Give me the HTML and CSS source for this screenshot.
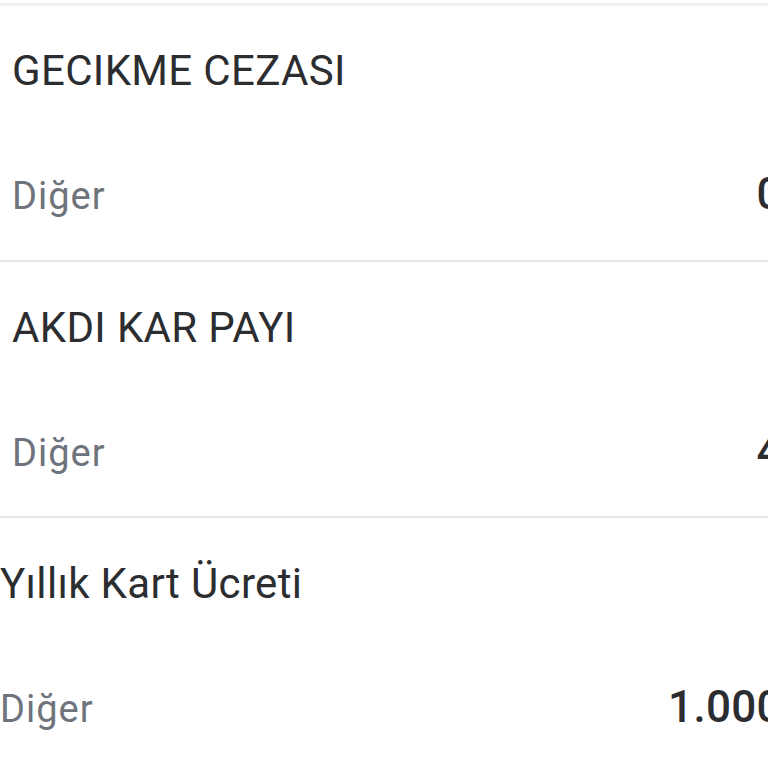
FILE: index.html
```html
<!DOCTYPE html>
<html lang="tr">

<head>
    <meta charset="UTF-8">
    <meta name="viewport" content="width=device-width, initial-scale=1.0">
    <title>Hesap Hareketleri</title>
    <link rel="stylesheet" href="styles.css">
</head>

<body>
    <!-- Hareket listesi -->
    <ul class="tx-list">
        <li class="tx-item">
            <div class="tx-title">GECIKME CEZASI</div>
            <div class="tx-meta">
                <span class="tx-type">Diğer</span>
                <span class="tx-amount">0,60 TL</span>
            </div>
        </li>
        <li class="tx-item">
            <div class="tx-title">AKDI KAR PAYI</div>
            <div class="tx-meta">
                <span class="tx-type">Diğer</span>
                <span class="tx-amount">4,75 TL</span>
            </div>
        </li>
        <li class="tx-item tx-item--swiped">
            <div class="tx-title">Yıllık Kart Ücreti</div>
            <div class="tx-meta">
                <span class="tx-type">Diğer</span>
                <span class="tx-amount">1.000,00 TL</span>
            </div>
        </li>
    </ul>
</body>

</html>
```

FILE: styles.css
```css
:root {
    --text-main: #2b2d30;
    --text-muted: #6e737c;
    --divider: #e6e6e6;
}

/* sayfa */
body {
    margin: 0;
    background: #fff;
    font-family: Roboto, "Noto Sans", Arial, sans-serif;
    overflow: hidden;
}

.tx-list {
    list-style: none;
    margin: 0;
    padding: 3px 0 0;
    width: 916px;
}

/* tek satır */
.tx-item {
    box-sizing: border-box;
    height: 257px;
    padding: 40px 12px 0;
    border-top: 3px solid #f0f0f0;
    background: #fff;
}

.tx-item + .tx-item {
    height: 256px;
    padding-top: 41px;
    border-top: 2px solid var(--divider);
}

/* yarım kaydırılmış satır */
.tx-item--swiped {
    margin-left: -12px;
}

.tx-title {
    font-size: 42px;
    line-height: 50px;
    letter-spacing: 0.35px;
    color: var(--text-main);
}

.tx-meta {
    display: flex;
    justify-content: space-between;
    align-items: baseline;
    margin-top: 75px;
}

.tx-type {
    font-size: 38px;
    line-height: 46px;
    letter-spacing: 1px;
    color: var(--text-muted);
}

.tx-amount {
    font-size: 44px;
    line-height: 46px;
    font-weight: 500;
    letter-spacing: 0.3px;
    color: var(--text-main);
}
```
